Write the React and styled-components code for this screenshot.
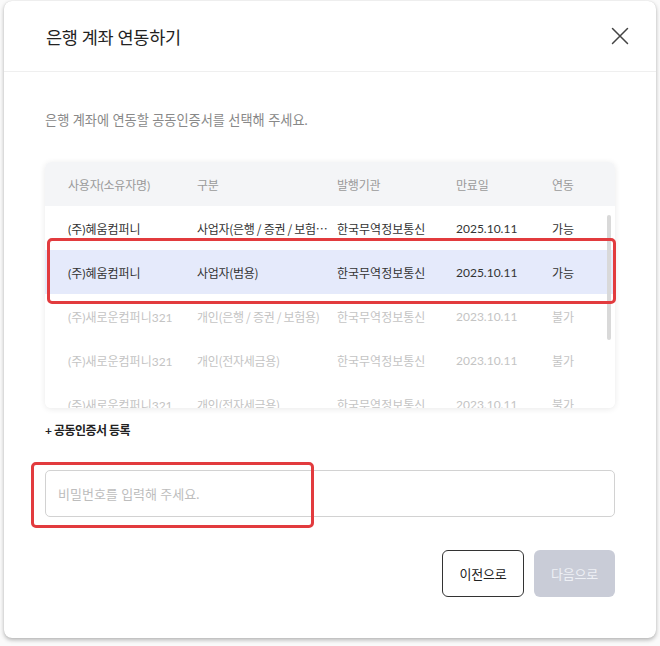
import React from 'react';
import styled, { createGlobalStyle } from 'styled-components';

const GlobalStyle = createGlobalStyle`
  html, body {
    margin: 0;
    padding: 0;
    background: #ffffff;
  }
  body {
    font-family: Lato, "Noto Sans CJK KR", sans-serif;
    -webkit-font-smoothing: antialiased;
  }
`;

const Page = styled.div`
  width: 660px;
  height: 646px;
  padding: 1px 4px 0 4px;
  box-sizing: border-box;
  background: #fafafa;
`;

const Modal = styled.div`
  position: relative;
  width: 652px;
  height: 637px;
  box-sizing: border-box;
  background: #fff;
  border-radius: 8px;
  box-shadow: 0 2px 4px rgba(0, 0, 0, 0.28), 0 0 1px rgba(0, 0, 0, 0.15);
  display: flex;
  flex-direction: column;
`;

const Header = styled.div`
  height: 71px;
  display: flex;
  align-items: center;
  justify-content: space-between;
  padding: 0 26px 0 42px;
  border-bottom: 1px solid #efefef;
  box-sizing: border-box;
`;

const Title = styled.h2`
  margin: 0;
  font-size: 17.5px;
  font-weight: 400;
  color: #222;
  letter-spacing: -0.3px;
`;

const CloseButton = styled.button`
  border: 0;
  background: none;
  padding: 0;
  width: 20px;
  height: 20px;
  display: flex;
  align-items: center;
  justify-content: center;
  cursor: pointer;
`;

const Body = styled.div`
  padding: 38px 41px 0 41px;
  display: flex;
  flex-direction: column;
`;

const Description = styled.p`
  margin: 0;
  font-size: 13.2px;
  line-height: 20px;
  color: #888;
`;

const TableCard = styled.div`
  position: relative;
  margin-top: 32px;
  border-radius: 6px;
  overflow: hidden;
  background: #fff;
  box-shadow: 0 1px 6px rgba(0, 0, 0, 0.09);
`;

const Columns = '129px 140px 119px 96px 1fr';

const HeadRow = styled.div`
  display: grid;
  grid-template-columns: ${Columns};
  height: 44px;
  align-items: center;
  background: #f4f5f7;
  padding-left: 23px;
`;

const HeadCell = styled.div`
  font-size: 12px;
  color: #9a9a9a;
  letter-spacing: -0.2px;
`;

const Scroller = styled.div`
  height: 202px;
  overflow: hidden;
`;

const ScrollThumb = styled.div`
  position: absolute;
  right: 4px;
  top: 53px;
  width: 4px;
  height: 125px;
  border-radius: 2px;
  background: #d9d9d9;
`;

const Row = styled.div`
  display: grid;
  grid-template-columns: ${Columns};
  height: 44px;
  align-items: center;
  padding-left: 23px;
  background: ${p => (p.$selected ? '#e5eafb' : '#fff')};
  color: ${p => (p.$disabled ? '#c4c4c4' : '#333')};
`;

const Cell = styled.div`
  font-size: 12px;
  padding-right: 10px;
  white-space: nowrap;
  overflow: hidden;
  text-overflow: ellipsis;
`;

const TypeCell = styled(Cell)`
  font-family: "Noto Sans CJK SC", "Noto Sans CJK KR", sans-serif;
  padding-right: 9px;
  letter-spacing: -0.3px;
`;

const AddLink = styled.a`
  margin-top: 15px;
  font-size: 12px;
  font-weight: 700;
  color: #222;
  text-decoration: none;
  letter-spacing: -0.5px;
  line-height: 16px;
`;

const PasswordInput = styled.input`
  margin-top: 31px;
  height: 47px;
  box-sizing: border-box;
  border: 1px solid #d2d2d2;
  border-radius: 5px;
  padding: 0 12px;
  font-family: inherit;
  font-size: 13px;
  outline: none;
  &::placeholder {
    color: #bdbdbd;
  }
`;

const Footer = styled.div`
  margin-top: 33px;
  display: flex;
  justify-content: flex-end;
  gap: 10px;
`;

const Button = styled.button`
  width: ${p => (p.$primary ? '81px' : '82px')};
  height: 47px;
  border-radius: 6px;
  font-family: inherit;
  font-size: 13px;
  letter-spacing: -0.2px;
  cursor: pointer;
  border: ${p => (p.$primary ? '0' : '1px solid #333')};
  background: ${p => (p.$primary ? '#c9ccd7' : '#fff')};
  color: ${p => (p.$primary ? '#eef0f5' : '#222')};
`;

const Marker = styled.div`
  position: absolute;
  box-sizing: border-box;
  border: 3px solid #e23b3e;
  border-radius: 5px;
  pointer-events: none;
`;

const rows = [
  { owner: '(주)혜움컴퍼니', type: '사업자(은행 / 증권 / 보험용)', issuer: '한국무역정보통신', expires: '2025.10.11', link: '가능' },
  { owner: '(주)혜움컴퍼니', type: '사업자(범용)', issuer: '한국무역정보통신', expires: '2025.10.11', link: '가능', selected: true },
  { owner: '(주)새로운컴퍼니321', type: '개인(은행 / 증권 / 보험용)', issuer: '한국무역정보통신', expires: '2023.10.11', link: '불가', disabled: true },
  { owner: '(주)새로운컴퍼니321', type: '개인(전자세금용)', issuer: '한국무역정보통신', expires: '2023.10.11', link: '불가', disabled: true },
  { owner: '(주)새로운컴퍼니321', type: '개인(전자세금용)', issuer: '한국무역정보통신', expires: '2023.10.11', link: '불가', disabled: true },
  { owner: '(주)새로운컴퍼니321', type: '개인(전자세금용)', issuer: '한국무역정보통신', expires: '2023.10.11', link: '불가', disabled: true },
];

const App = () => (
  <Page>
    <GlobalStyle />
    <Modal>
      <Header>
        <Title>은행 계좌 연동하기</Title>
        <CloseButton aria-label="닫기">
          <svg width="18" height="18" viewBox="0 0 18 18" fill="none" stroke="#444" strokeWidth="1.5" strokeLinecap="round">
            <path d="M1.5 1.5 L16.5 16.5 M16.5 1.5 L1.5 16.5" />
          </svg>
        </CloseButton>
      </Header>
      <Body>
        <Description>은행 계좌에 연동할 공동인증서를 선택해 주세요.</Description>
        <TableCard>
          <HeadRow>
            <HeadCell>사용자(소유자명)</HeadCell>
            <HeadCell>구분</HeadCell>
            <HeadCell>발행기관</HeadCell>
            <HeadCell>만료일</HeadCell>
            <HeadCell>연동</HeadCell>
          </HeadRow>
          <Scroller>
            {rows.map((r, i) => (
              <Row key={i} $selected={r.selected} $disabled={r.disabled}>
                <Cell>{r.owner}</Cell>
                <TypeCell>{r.type}</TypeCell>
                <Cell>{r.issuer}</Cell>
                <Cell>{r.expires}</Cell>
                <Cell>{r.link}</Cell>
              </Row>
            ))}
          </Scroller>
          <ScrollThumb />
        </TableCard>
        <AddLink href="#">+ 공동인증서 등록</AddLink>
        <PasswordInput type="password" placeholder="비밀번호를 입력해 주세요." />
        <Footer>
          <Button>이전으로</Button>
          <Button $primary disabled>다음으로</Button>
        </Footer>
      </Body>
      <Marker style={{ left: 43, top: 237, width: 569, height: 66 }} />
      <Marker style={{ left: 27, top: 461, width: 283, height: 66 }} />
    </Modal>
  </Page>
);

export default App;
